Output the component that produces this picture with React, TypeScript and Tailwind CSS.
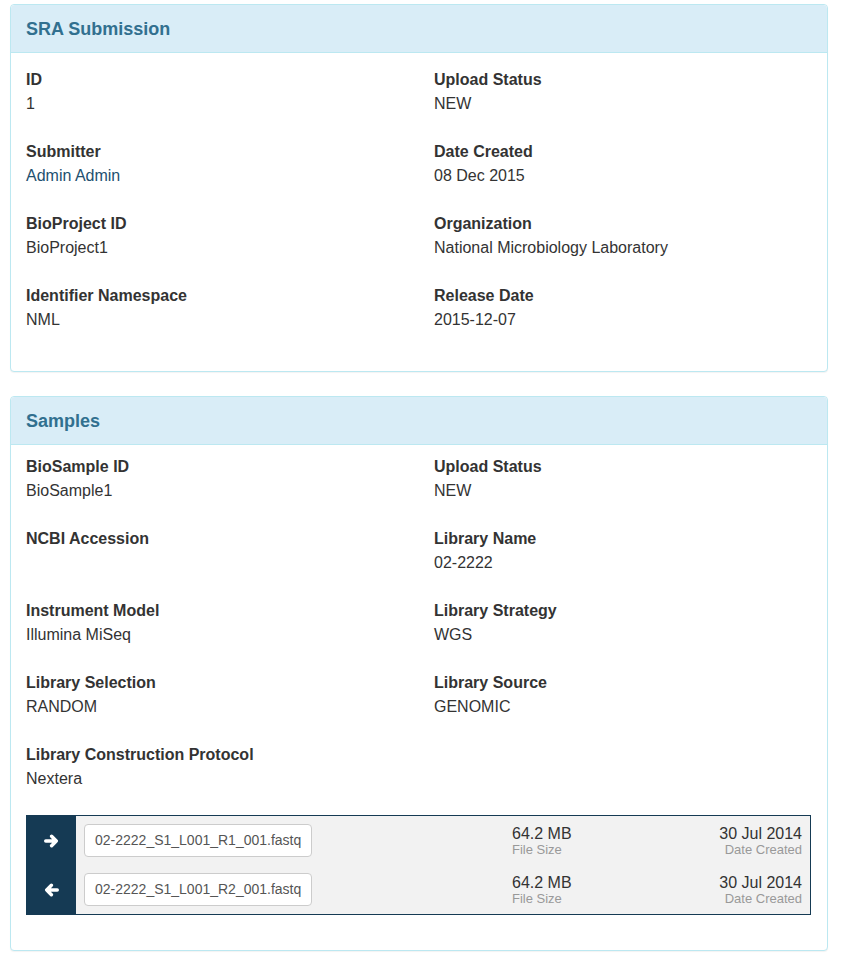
const fields1 = [
  ["ID", "1", "Upload Status", "NEW"],
  ["Submitter", "Admin Admin", "Date Created", "08 Dec 2015"],
  ["BioProject ID", "BioProject1", "Organization", "National Microbiology Laboratory"],
  ["Identifier Namespace", "NML", "Release Date", "2015-12-07"],
];

const fields2 = [
  ["BioSample ID", "BioSample1", "Upload Status", "NEW"],
  ["NCBI Accession", "", "Library Name", "02-2222"],
  ["Instrument Model", "Illumina MiSeq", "Library Strategy", "WGS"],
  ["Library Selection", "RANDOM", "Library Source", "GENOMIC"],
  ["Library Construction Protocol", "Nextera", "", ""],
];

const files = [
  { name: "02-2222_S1_L001_R1_001.fastq", dir: "right" },
  { name: "02-2222_S1_L001_R2_001.fastq", dir: "left" },
];

const Arrow = ({ dir }: { dir: string }) => (
  <svg width="15" height="14" viewBox="0 0 15 14" className={dir === "left" ? "rotate-180" : ""}>
    <path d="M1.7 7H12.3M7.6 2.2L12.3 7L7.6 11.8" fill="none" stroke="white" strokeWidth="3.4" strokeLinecap="round" strokeLinejoin="round" />
  </svg>
);

const Field = ({ label, value, link }: { label: string; value: string; link?: boolean }) => (
  <div className="mb-6">
    <div className="font-bold leading-6 h-6">{label}</div>
    <div className={`leading-6 h-6 ${link ? "text-[#22506f]" : ""}`}>{value}</div>
  </div>
);

const Panel = ({ title, children }: { title: string; children: React.ReactNode }) => (
  <div className="w-[818px] border border-[#bce8f1] rounded bg-white shadow-[0_1px_1px_rgba(0,0,0,0.05)]">
    <div className="h-[48px] flex items-center px-[15px] pt-[2px] bg-[#d9edf7] border-b border-[#bce8f1] rounded-t text-[#31708f] text-[18px] font-bold">
      {title}
    </div>
    {children}
  </div>
);

export default function App() {
  return (
    <div className="min-h-screen bg-white pt-1 px-[10px] text-[16px] text-[#333]" style={{ fontFamily: '"Liberation Sans", Arial, sans-serif' }}>
      <Panel title="SRA Submission">
        <div className="px-[15px] pt-[15px] pb-[15px]">
          {fields1.map((r) => (
            <div key={r[0]} className="grid grid-cols-[408px_1fr]">
              <Field label={r[0]} value={r[1]} link={r[0] === "Submitter"} />
              <Field label={r[2]} value={r[3]} />
            </div>
          ))}
        </div>
      </Panel>

      <div className="h-6" />

      <Panel title="Samples">
        <div className="px-[15px] pt-[10px] pb-[35px]">
          {fields2.map((r) => (
            <div key={r[0]} className="grid grid-cols-[408px_1fr]">
              <Field label={r[0]} value={r[1]} />
              {r[2] ? <Field label={r[2]} value={r[3]} /> : <div />}
            </div>
          ))}
          <div className="w-[785px] border border-[#153a54] flex">
            <div className="w-[49px] bg-[#153a54] flex flex-col">
              {files.map((f) => (
                <div key={f.name} className="h-[49px] flex items-center justify-center">
                  <Arrow dir={f.dir} />
                </div>
              ))}
            </div>
            <div className="flex-1 bg-[#f2f2f2] flex flex-col">
              {files.map((f) => (
                <div key={f.name} className="h-[49px] flex items-center pl-2 pr-2">
                  <div className="w-[228px] h-[33px] shrink-0 whitespace-nowrap border border-[#ccc] rounded bg-white flex items-center px-[10px] text-[14px] text-[#555]">
                    {f.name}
                  </div>
                  <div className="ml-[200px] flex flex-col">
                    <span className="leading-[18px]">64.2 MB</span>
                    <span className="text-[13px] leading-[14px] text-[#999]">File Size</span>
                  </div>
                  <div className="ml-auto flex flex-col items-end">
                    <span className="leading-[18px]">30 Jul 2014</span>
                    <span className="text-[13px] leading-[14px] text-[#999]">Date Created</span>
                  </div>
                </div>
              ))}
            </div>
          </div>
        </div>
      </Panel>
    </div>
  );
}
